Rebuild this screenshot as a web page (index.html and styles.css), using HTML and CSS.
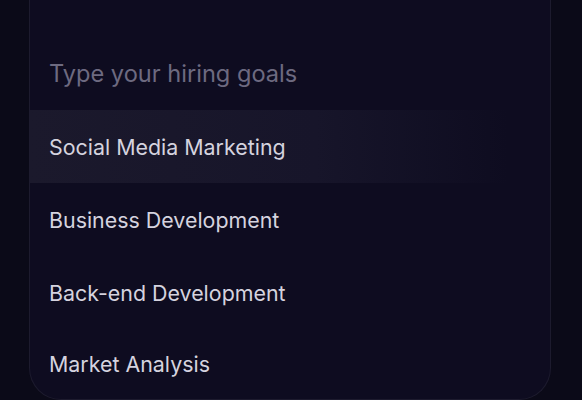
FILE: index.html
```html
<!DOCTYPE html>
<html lang="en">
<head>
    <meta charset="UTF-8">
    <meta name="viewport" content="width=device-width, initial-scale=1.0">
    <title>Hiring Goals</title>
    <link rel="stylesheet" href="styles.css">
</head>
<body>
    <div class="goals-card">
        <div class="goal-input">Type your hiring goals</div>
        <ul class="goal-list">
            <li class="goal-item active">Social Media Marketing</li>
            <li class="goal-item">Business Development</li>
            <li class="goal-item">Back-end Development</li>
            <li class="goal-item">Market Analysis</li>
        </ul>
    </div>
</body>
</html>
```

FILE: styles.css
```css
body {
    margin: 0;
    background-color: #0b0a18;
    font-family: Inter, "Noto Sans", sans-serif;
    height: 400px;
    overflow: hidden;
}
.goals-card {
    margin: 0 31px 0 29px;
    padding-top: 36px;
    background-color: #0e0c20;
    border: 1px solid #1d1b2e;
    border-top: none;
    border-radius: 0 0 32px 32px;
    overflow: hidden;
}
.goal-input {
    height: 74px;
    display: flex;
    align-items: center;
    padding-left: 19px;
    font-size: 23.6px;
    color: #6d6a80;
}
.goal-list {
    list-style: none;
    margin: 0;
    padding: 0;
}
.goal-item {
    height: 73px;
    display: flex;
    align-items: center;
    padding-left: 19px;
    font-size: 21.4px;
    color: #d5d3df;
}
.goal-item:last-child { height: 70px; }
.goal-item.active {
    background: linear-gradient(90deg, #1b192c 0%, #17152a 55%, rgba(14,12,32,0) 92%);
}
```
